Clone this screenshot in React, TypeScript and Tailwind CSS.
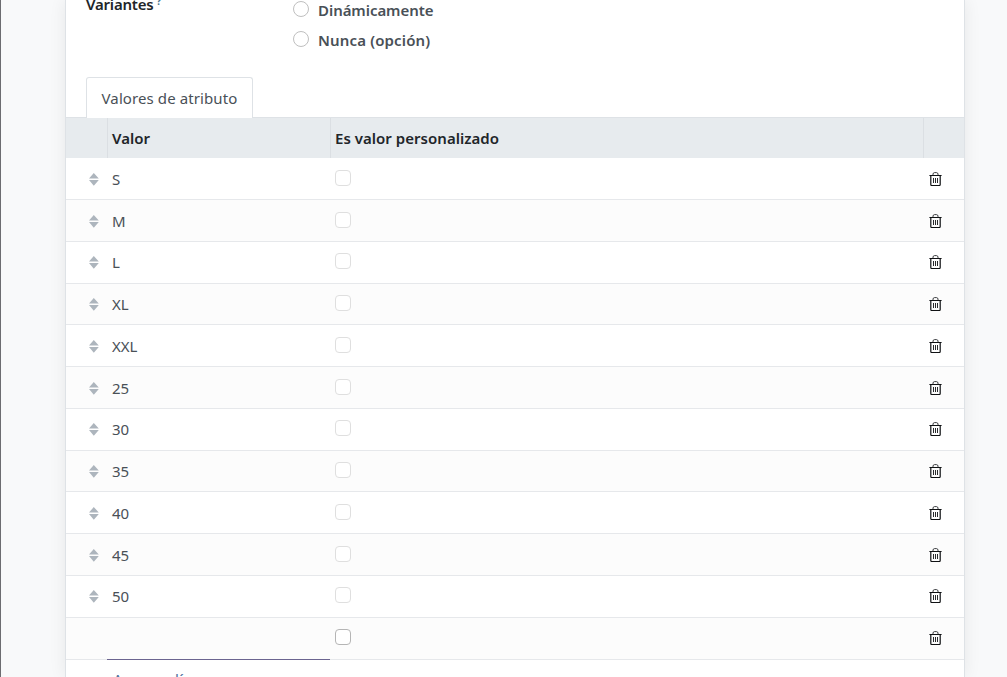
const rows = ['S', 'M', 'L', 'XL', 'XXL', '25', '30', '35', '40', '45', '50', ''];

function SortIcon() {
  return (
    <svg width="10" height="13" viewBox="0 0 10 13" fill="#adb5bd" className="block">
      <path d="M4.8 0 L9.8 5.6 H0 Z M0 7 H9.8 L4.8 12.7 Z" />
    </svg>
  );
}

function TrashIcon() {
  return (
    <svg width="13" height="14" viewBox="0 0 13 14" fill="none" stroke="#101214" className="block">
      <path d="M0.4 3.5H12.6" />
      <path d="M4 3V2Q4.3 0.6 5.4 0.6H7.6Q8.7 0.6 9 2V3" stroke="#3c3e41" />
      <path d="M1.8 3.5V12.6Q1.8 13.5 2.7 13.5H10.3Q11.2 13.5 11.2 12.6V3.5" strokeWidth="1.2" />
      <path d="M4.5 6V11M6.5 6V11M8.5 6V11" strokeWidth="0.9" />
    </svg>
  );
}

function Radio({ label, spacing = '' }: { label: string; spacing?: string }) {
  return (
    <label className="flex h-[30px] items-center">
      <span className="mb-[3px] size-4 rounded-full border border-[#bfbfbf] bg-white" />
      <span className={`ml-[9px] text-[15px] font-semibold text-[#495057] ${spacing}`}>{label}</span>
    </label>
  );
}

export default function App() {
  return (
    <div className="flex h-[677px] w-[1007px] overflow-hidden border-l border-[#6c6c70] bg-[#f8f9fa] font-['Noto_Sans','Open_Sans',sans-serif] text-[15px] leading-[22px] text-[#495057]">
      <main className="ml-16 h-[677px] w-[900px] shrink-0 border-x border-[#dee2e6] bg-white shadow-[0_0_16px_rgba(0,0,0,0.075)]">
        <div className="flex h-[77px] pl-5">
          <div className="-mt-[7px] w-[207px] font-semibold text-[#212529]">
            <span className="tracking-[-0.2px]">Variantes</span>
            <sup className="ml-[3px] text-[10px] font-bold text-[#4c7690]">?</sup>
          </div>
          <div className="-mt-[5px]">
            <Radio label="Dinámicamente" spacing="tracking-[-0.05px]" />
            <Radio label="Nunca (opción)" spacing="tracking-[0.15px]" />
          </div>
        </div>
        <div className="relative z-10 -mb-px flex h-[41px] pl-5">
          <div className="flex w-[167px] items-center justify-center rounded-t-[3px] border border-b-0 border-[#dee2e6] bg-white tracking-[0.1px]">
            Valores de atributo
          </div>
        </div>
        <div className="grid h-[41px] grid-cols-[42px_223px_592px_41px] border-t border-[#dee2e6] bg-[#e7ebee] font-semibold text-[#212529]">
          <div className="border-r border-[#dbdfe3]" />
          <div className="flex items-center border-r border-[#dbdfe3] pl-[4px]">Valor</div>
          <div className="flex items-center pl-[4px] tracking-[0.03px]">Es valor personalizado</div>
          <div className="border-l border-[#dbdfe3]" />
        </div>
        {rows.map((value, i) => (
          <div
            key={i}
            className={`grid grid-cols-[41px_223px_593px_41px] border-b border-[#e6e8eb] ${i % 4 === 3 && i < 8 ? 'h-[41px]' : 'h-[42px]'} ${i % 4 > 1 ? 'pt-[10px]' : 'pt-[11px]'} ${i % 2 ? 'bg-[#fcfcfc]' : 'bg-white'}`}
          >
            <div className="pt-1 pl-[23px]">{value && <SortIcon />}</div>
            <div className={`pl-[5px] leading-5 ${value ? '' : '-mb-px border-b border-[#6b6490]'}`}>{value}</div>
            <div className="pt-px pl-[5px]">
              <span className={`block size-4 rounded-[4px] border bg-white ${value ? 'border-[#dfdfdf]' : 'border-[#b5b5b5]'}`} />
            </div>
            <div className="pt-[3px] pl-[6px]"><TrashIcon /></div>
          </div>
        ))}
        <div className="mt-[8px] pl-[47px] tracking-[0.15px] text-[#4a6f9c]">Agregar línea</div>
      </main>
    </div>
  );
}
